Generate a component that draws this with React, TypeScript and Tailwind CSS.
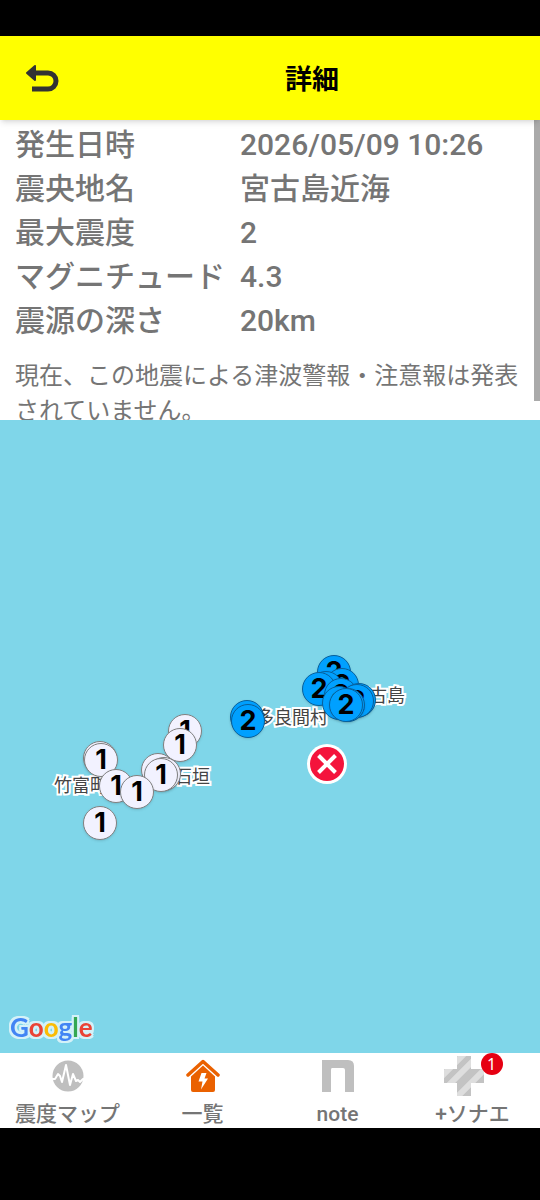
import type { ReactNode } from "react";
import clsx from "clsx";

type Pin = { x: number; y: number; level: 1 | 2 };
type Place = { x: number; y: number; name: string };

const DETAILS = [
  { label: "発生日時", value: "2026/05/09 10:26" },
  { label: "震央地名", value: "宮古島近海" },
  { label: "最大震度", value: "2" },
  { label: "マグニチュード", value: "4.3" },
  { label: "震源の深さ", value: "20km" },
];

// Offsets in pixels from the centre of the map
const PLACES: Place[] = [
  { x: -189, y: 49, name: "竹富町" },
  { x: -78, y: 40, name: "石垣" },
  { x: 22, y: -19, name: "多良間村" },
  { x: 108, y: -41, name: "宮古島" },
];

const PINS: Pin[] = [
  { x: -85, y: -6, level: 1 },
  { x: -90, y: 8, level: 1 },
  { x: -170, y: 21, level: 1 },
  { x: -169, y: 23, level: 1 },
  { x: -154, y: 49, level: 1 },
  { x: -112, y: 33, level: 1 },
  { x: -106, y: 37, level: 1 },
  { x: -109, y: 38, level: 1 },
  { x: -133, y: 55, level: 1 },
  { x: -170, y: 86, level: 1 },
  { x: -23, y: -20, level: 2 },
  { x: -22, y: -16, level: 2 },
  { x: 64, y: -65, level: 2 },
  { x: 72, y: -52, level: 2 },
  { x: 56, y: -49, level: 2 },
  { x: 49, y: -48, level: 2 },
  { x: 71, y: -42, level: 2 },
  { x: 89, y: -37, level: 2 },
  { x: 87, y: -36, level: 2 },
  { x: 69, y: -34, level: 2 },
  { x: 78, y: -32, level: 2 },
  { x: 76, y: -32, level: 2 },
];

const at = (x: number, y: number) => ({
  left: `calc(50% + ${x}px)`,
  top: `calc(50% + ${y}px)`,
});

function Header() {
  return (
    <header className="relative z-10 flex h-21 items-center bg-[#ffff00] shadow-md">
      <button
        type="button"
        aria-label="戻る"
        className="flex h-full w-21 items-center justify-center"
      >
        <svg width="34" height="28" viewBox="0 0 34 28">
          <path
            d="M9 9H23a8 8 0 0 1 0 16H7"
            fill="none"
            stroke="#333"
            strokeWidth="5"
          />
          <path
            d="M2 9 10 2V16Z"
            fill="#333"
            stroke="#333"
            strokeWidth="2"
            strokeLinejoin="round"
          />
        </svg>
      </button>
      <h1 className="flex-1 pt-1 text-center text-[27px] font-bold text-black">
        詳細
      </h1>
    </header>
  );
}

function Details() {
  return (
    <section className="relative h-75 overflow-hidden bg-white px-[15px] pt-[3px] text-[#757575]">
      <dl className="text-[30px] leading-11 font-medium">
        {DETAILS.map((row) => (
          <div key={row.label} className="flex">
            <dt className="w-[225px] shrink-0 whitespace-nowrap">
              {row.label}
            </dt>
            <dd>{row.value}</dd>
          </div>
        ))}
      </dl>
      <p className="mt-4 text-2xl leading-[35px]">
        現在、この地震による津波警報・注意報は発表されていません。
      </p>
      <div className="absolute top-0 right-0 h-[281px] w-1.5 bg-[#aaaaaa]" />
    </section>
  );
}

function QuakeMap() {
  return (
    <main className="relative min-h-[400px] flex-1 overflow-hidden bg-[#7fd6e9]">
      {PLACES.map((place) => (
        <span
          key={place.name}
          style={at(place.x, place.y)}
          className="absolute -translate-1/2 text-lg whitespace-nowrap text-[#444] [paint-order:stroke_fill] [-webkit-text-stroke:4px_white]"
        >
          {place.name}
        </span>
      ))}
      {PINS.map((pin, i) => (
        <span
          key={i}
          style={at(pin.x, pin.y)}
          className={clsx(
            "absolute flex size-[34px] -translate-1/2 items-center justify-center rounded-full border font-[Inter,sans-serif] text-[27px] leading-none font-bold text-black shadow",
            pin.level === 2
              ? "border-[#08609c] bg-[#00a0ff]"
              : "border-[#808080] bg-[#f2f2ff]"
          )}
        >
          {pin.level}
        </span>
      ))}
      <svg
        style={at(57, 27)}
        className="absolute -translate-1/2"
        width="40"
        height="40"
        viewBox="0 0 40 40"
        role="img"
        aria-label="震源"
      >
        <circle cx="20" cy="20" r="20" fill="#fff" />
        <circle cx="20" cy="20" r="17" fill="#f4143c" />
        <path d="m11.5 11.5 17 17m0-17-17 17" stroke="#fff" strokeWidth="4" />
      </svg>
      <div className="absolute bottom-2 left-2.5 font-[Lato,sans-serif] text-[26px] leading-9 font-bold [filter:drop-shadow(2px_0_0_#d4f1f8)_drop-shadow(-2px_0_0_#d4f1f8)_drop-shadow(0_2px_0_#d4f1f8)_drop-shadow(0_-2px_0_#d4f1f8)]">
        <span className="text-[#4285f4]">G</span>
        <span className="text-[#ea4335]">o</span>
        <span className="text-[#fbbc05]">o</span>
        <span className="text-[#4285f4]">g</span>
        <span className="text-[#34a853]">l</span>
        <span className="text-[#ea4335]">e</span>
      </div>
    </main>
  );
}

function Tab({ label, children }: { label: string; children: ReactNode }) {
  return (
    <a href="#" className="flex flex-1 flex-col items-center">
      <span className="flex h-12 items-center justify-center pb-0.5">
        {children}
      </span>
      <span className="text-[21px] leading-[26px] font-medium whitespace-nowrap text-[#757575]">
        {label}
      </span>
    </a>
  );
}

function TabBar() {
  return (
    <nav className="flex h-[75px] bg-white">
      <Tab label="震度マップ">
        <svg width="32" height="32" viewBox="0 0 32 32">
          <circle cx="16" cy="16" r="15.5" fill="#bfbfbf" />
          <path
            d="M0 19h3l3-5 2 2 2 6 4-17 4 20 3-11 3 7 2-1 2 2 3-3h2"
            fill="none"
            stroke="#fff"
            strokeWidth="2"
            strokeLinejoin="round"
          />
        </svg>
      </Tab>
      <Tab label="一覧">
        <svg width="34" height="34" viewBox="0 0 34 34">
          <path
            d="M2 16 17 2.5 32 16"
            fill="none"
            stroke="#ea6100"
            strokeWidth="3.5"
            strokeLinecap="round"
            strokeLinejoin="round"
          />
          <path
            d="M17 6.5 29 17.5V31a2 2 0 0 1-2 2H7a2 2 0 0 1-2-2V17.5Z"
            fill="#ea6100"
          />
          <path d="M15.5 14h5l-2 5.5H22l-7 11 1.5-8h-4Z" fill="#fff" />
        </svg>
      </Tab>
      <Tab label="note">
        <svg width="34" height="34" viewBox="0 0 34 34">
          <path
            d="M1 1h26q6 0 6 6v26h-9V11q0-2-2-2H11q-1 0-1 2v22H1Z"
            fill="#bfbfbf"
          />
        </svg>
      </Tab>
      <Tab label="+ソナエ">
        <span className="relative block h-[42px] w-[60px]">
          <svg width="42" height="42" viewBox="0 0 42 42">
            <clipPath id="cross">
              <path d="M14 1h14v13h13v14H28v13H14V28H1V14h13Z" />
            </clipPath>
            <g clipPath="url(#cross)">
              <path d="M0 0h42v42H0Z" fill="#c3c3c3" />
              <path
                d="M-4 24 24-4M0 36 36 0M10 46 46 10"
                stroke="#dedede"
                strokeWidth="6"
              />
            </g>
          </svg>
          <span className="absolute -top-0.5 right-0 flex size-[22px] items-center justify-center rounded-full bg-[#e60012] font-['Noto_Sans',sans-serif] text-base leading-none text-white">
            1
          </span>
        </span>
      </Tab>
    </nav>
  );
}

export default function App() {
  return (
    <div
      lang="ja"
      className="flex min-h-screen flex-col bg-black pt-9 pb-18 font-[Roboto,'Noto_Sans_CJK_JP',sans-serif]"
    >
      <Header />
      <Details />
      <QuakeMap />
      <TabBar />
    </div>
  );
}
